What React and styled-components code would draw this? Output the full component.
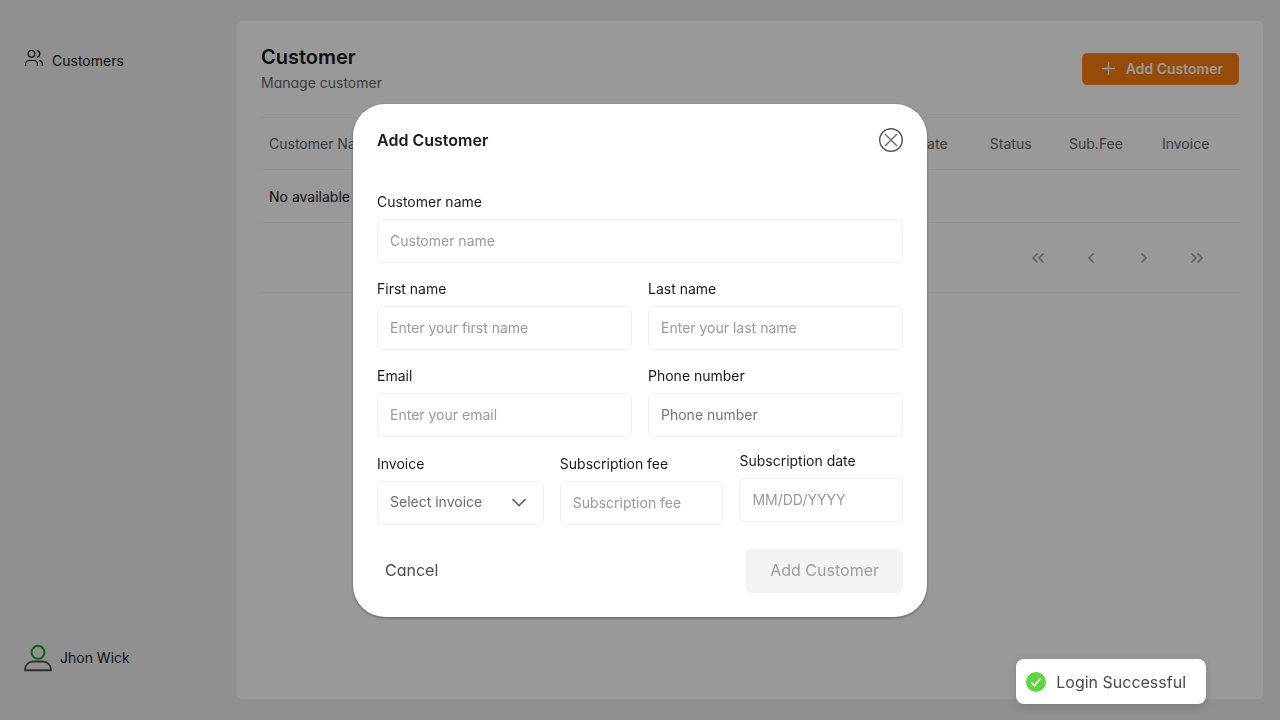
import React from 'react';
import styled, { createGlobalStyle, css } from 'styled-components';
import { Users } from 'lucide-react';

const GlobalStyle = createGlobalStyle`
  *, *::before, *::after { box-sizing: border-box; }
  body {
    margin: 0;
    background: #f1f1f1;
    color: #1a1a1a;
    font-family: Inter, "Liberation Sans", sans-serif;
    font-size: 14px;
    line-height: 20px;
  }
  button, input, select { font: inherit; }
`;

const Page = styled.div`
  display: flex;
  min-height: 100vh;
`;

const Sidebar = styled.aside`
  display: flex;
  flex-direction: column;
  justify-content: space-between;
  flex: 0 0 237px;
  padding: 48px 24px;
`;

const NavLink = styled.a`
  display: flex;
  align-items: center;
  gap: 8px;
  color: inherit;
  text-decoration: none;
`;

const NavIcon = styled.span`
  display: flex;
  height: 26px;
`;

const Profile = styled.div`
  display: flex;
  align-items: center;
  gap: 8px;
`;

const Main = styled.main`
  display: flex;
  flex: 1;
  min-width: 0;
  padding: 21px 17px 21px 0;
`;

const Panel = styled.section`
  flex: 1;
  min-width: 0;
  padding: 24px;
  border-radius: 5px;
  background: #fff;
`;

const PanelHeader = styled.header`
  display: flex;
  align-items: center;
  justify-content: space-between;
  margin-bottom: 24px;
`;

const PageTitle = styled.h1`
  margin: 0 0 4px;
  font-size: 20px;
  line-height: 24px;
  font-weight: 600;
`;

const Subtitle = styled.p`
  margin: 0;
  color: #666;
  line-height: 20px;
  font-feature-settings: "cv11";
`;

const AddButton = styled.button`
  display: flex;
  align-items: center;
  gap: 8px;
  height: 32px;
  padding: 0 15px;
  border: 1px solid #ff8a26;
  border-radius: 5px;
  background: #fa7d0f;
  color: #fff;
  font-weight: 600;
`;

const Table = styled.table`
  width: 100%;
  table-layout: fixed;
  border-collapse: separate;
  border-spacing: 0;
`;

const Column = styled.col`
  width: ${(p) => p.$width};
`;

const cell = css`
  height: 53px;
  padding: 0 8px;
  border-bottom: 1px solid #f3f3f3;
  text-align: left;
  font-weight: 400;
  white-space: nowrap;
`;

const HeadCell = styled.th`
  ${cell}
  border-top: 1px solid #f3f3f3;
  color: #666;
`;

const BodyCell = styled.td`
  ${cell}
  padding-top: 2px;
`;

const Pagination = styled.nav`
  display: flex;
  align-items: center;
  justify-content: flex-end;
  gap: 33px;
  height: 70px;
  padding-right: 32px;
  border-bottom: 1px solid #f3f3f3;
`;

const IconButton = styled.button`
  display: flex;
  padding: 0;
  border: 0;
  background: none;
  color: #a0a0a5;
`;

const Overlay = styled.div`
  position: fixed;
  inset: 0;
  display: flex;
  align-items: center;
  justify-content: center;
  padding-top: 1px;
  background: rgba(0, 0, 0, 0.4);
`;

const Modal = styled.div`
  width: 574px;
  max-width: 100%;
  padding: 24px;
  border-radius: 32px;
  background: #fff;
  box-shadow: 0 1px 3px rgba(0, 0, 0, 0.4);
`;

const ModalHeader = styled.header`
  display: flex;
  align-items: center;
  justify-content: space-between;
  margin-bottom: 40px;
`;

const ModalTitle = styled.h2`
  margin: 0;
  font-size: 16px;
  line-height: 24px;
  font-weight: 600;
`;

const FieldGrid = styled.div`
  display: grid;
  grid-template-columns: 1fr 1fr;
  gap: 16px;
`;

const BillingGrid = styled.div`
  display: grid;
  grid-template-columns: 1.02fr 1fr 1fr;
  align-items: end;
  gap: 16px;
  margin-top: 14px;
`;

const FieldBox = styled.div`
  display: flex;
  flex-direction: column;
  gap: 7px;
  min-width: 0;
  grid-column: ${(p) => (p.$wide ? '1 / -1' : 'auto')};
  padding-bottom: ${(p) => (p.$hint ? '3px' : '0')};
`;

const Label = styled.label`
  line-height: 20px;
`;

const control = css`
  width: 100%;
  height: 44px;
  border: 1px solid #f1f1f1;
  border-radius: 6px;
  background: #fff;
`;

const TextInput = styled.input`
  ${control}
  padding: 0 12px 1px;
  color: #1a1a1a;
  outline: none;

  &::placeholder {
    color: ${(p) => (p.$strong ? '#757575' : '#9a9a9a')};
    opacity: 1;
  }
`;

const SelectBox = styled.div`
  ${control}
  display: grid;
  align-items: center;
`;

const Select = styled.select`
  grid-area: 1 / 1;
  height: 100%;
  padding: 0 40px 2px 12px;
  border: 0;
  background: none;
  color: #6b6b6b;
  appearance: none;
  outline: none;
`;

const SelectArrow = styled.svg`
  grid-area: 1 / 1;
  justify-self: end;
  margin-right: 16px;
  pointer-events: none;
`;

const ModalFooter = styled.footer`
  display: flex;
  justify-content: space-between;
  margin-top: 24px;
`;

const footerButton = css`
  height: 44px;
  border: 0;
  border-radius: 5px;
  font-size: 16px;
`;

const CancelButton = styled.button`
  ${footerButton}
  padding: 0 8px 2px;
  background: none;
  color: #4d4d4d;
  font-feature-settings: "cv11";
`;

const SubmitButton = styled.button`
  ${footerButton}
  padding: 0 24px 2px;
  background: #f3f3f3;
  color: #9e9e9e;
`;

const Toast = styled.div`
  position: fixed;
  right: 74px;
  bottom: 16px;
  display: flex;
  align-items: center;
  gap: 10px;
  height: 45px;
  padding: 0 20px 0 10px;
  border-radius: 8px;
  background: #fff;
  box-shadow: 0 3px 10px rgba(0, 0, 0, 0.15);
  color: #4a4a4a;
  font-size: 16px;
`;

const columns = [
  { label: 'Customer Name', width: '26%' },
  { label: 'Email', width: 'auto' },
  { label: 'Phone', width: 'auto' },
  { label: 'Sub.Date', width: '10.5%' },
  { label: 'Status', width: '8.1%' },
  { label: 'Sub.Fee', width: '9.5%' },
  { label: 'Invoice', width: '8.7%' },
];

const pages = [
  { label: 'First page', d: 'M9.500 5.500 5 10l4.500 4.500M15.500 5.500 11 10l4.500 4.500' },
  { label: 'Previous page', d: 'M12.500 5.500 8 10l4.500 4.500' },
  { label: 'Next page', d: 'M7.500 5.500 12 10l-4.500 4.500' },
  { label: 'Last page', d: 'M4.500 5.500 9 10l-4.500 4.500M10.500 5.500 15 10l-4.500 4.500' },
];

function ProfileIcon() {
  return (
    <svg width="28" height="28" viewBox="0 0 28 28" fill="none" strokeWidth="2" strokeLinejoin="round" aria-hidden="true">
      <circle cx="14" cy="8.3" r="6.5" stroke="#19a519" />
      <path d="M1 26.3C1 20.8 4.600 17.600 9.500 17.600h9c4.900 0 8.500 3.200 8.500 8.700Z" stroke="#505050" />
    </svg>
  );
}

function Field({ id, label, wide, hint, ...input }) {
  return (
    <FieldBox $wide={wide} $hint={hint}>
      <Label htmlFor={id}>{label}</Label>
      <TextInput id={id} {...input} />
    </FieldBox>
  );
}

export default function App() {
  return (
    <>
      <GlobalStyle />
      <Page>
        <Sidebar>
          <nav>
            <NavLink href="#customers">
              <NavIcon><Users size={20} strokeWidth={1.4} /></NavIcon>
              Customers
            </NavLink>
          </nav>
          <Profile>
            <ProfileIcon />
            Jhon Wick
          </Profile>
        </Sidebar>
        <Main>
          <Panel>
            <PanelHeader>
              <div>
                <PageTitle>Customer</PageTitle>
                <Subtitle>Manage customer</Subtitle>
              </div>
              <AddButton type="button">
                <svg width="20" height="20" viewBox="0 0 20 20" fill="none" stroke="currentColor" strokeWidth="1.3" aria-hidden="true">
                  <path d="M10.500 3v13M4 9.500h13" />
                </svg>
                Add Customer
              </AddButton>
            </PanelHeader>
            <Table>
              <colgroup>
                {columns.map((c) => <Column key={c.label} $width={c.width} />)}
              </colgroup>
              <thead>
                <tr>{columns.map((c) => <HeadCell key={c.label} scope="col">{c.label}</HeadCell>)}</tr>
              </thead>
              <tbody>
                <tr><BodyCell colSpan={columns.length}>No available data</BodyCell></tr>
              </tbody>
            </Table>
            <Pagination aria-label="Pagination">
              {pages.map((p) => (
                <IconButton key={p.label} type="button" aria-label={p.label}>
                  <svg width="20" height="20" viewBox="0 0 20 20" fill="none" stroke="currentColor" strokeWidth="1.6" aria-hidden="true">
                    <path d={p.d} />
                  </svg>
                </IconButton>
              ))}
            </Pagination>
          </Panel>
        </Main>
      </Page>

      <Overlay>
        <Modal role="dialog" aria-modal="true" aria-labelledby="modal-title">
          <ModalHeader>
            <ModalTitle id="modal-title">Add Customer</ModalTitle>
            <IconButton type="button" aria-label="Close">
              <svg width="24" height="24" viewBox="0 0 24 24" fill="none" aria-hidden="true">
                <circle cx="12" cy="12" r="11.300" stroke="#555" strokeWidth="1.400" />
                <path d="m6 6 12 12M18 6 6 18" stroke="#667085" strokeWidth="1.500" />
              </svg>
            </IconButton>
          </ModalHeader>
          <form>
            <FieldGrid>
              <Field wide id="customer" label="Customer name" placeholder="Customer name" />
              <Field id="first" label="First name" placeholder="Enter your first name" />
              <Field id="last" label="Last name" placeholder="Enter your last name" />
              <Field id="email" type="email" label="Email" placeholder="Enter your email" />
              <Field id="phone" type="tel" label="Phone number" placeholder="Phone number" $strong />
            </FieldGrid>
            <BillingGrid>
              <FieldBox>
                <Label htmlFor="invoice">Invoice</Label>
                <SelectBox>
                  <Select id="invoice" defaultValue="">
                    <option value="">Select invoice</option>
                  </Select>
                  <SelectArrow width="16" height="16" viewBox="0 0 16 16" fill="none" stroke="#5b6478" strokeWidth="1.700" aria-hidden="true">
                    <path d="m1.500 4.200 6.500 6.300 6.500-6.300" />
                  </SelectArrow>
                </SelectBox>
              </FieldBox>
              <Field id="fee" label="Subscription fee" placeholder="Subscription fee" />
              <Field hint id="date" label="Subscription date" placeholder="MM/DD/YYYY" />
            </BillingGrid>
            <ModalFooter>
              <CancelButton type="button">Cancel</CancelButton>
              <SubmitButton type="submit" disabled>Add Customer</SubmitButton>
            </ModalFooter>
          </form>
        </Modal>
      </Overlay>

      <Toast role="status">
        <svg width="20" height="20" viewBox="0 0 20 20" fill="none" aria-hidden="true">
          <circle cx="10" cy="10" r="10" fill="#61d345" />
          <path d="m5.500 10.500 3 3 6-7" stroke="#fff" strokeWidth="1.600" />
        </svg>
        Login Successful
      </Toast>
    </>
  );
}
